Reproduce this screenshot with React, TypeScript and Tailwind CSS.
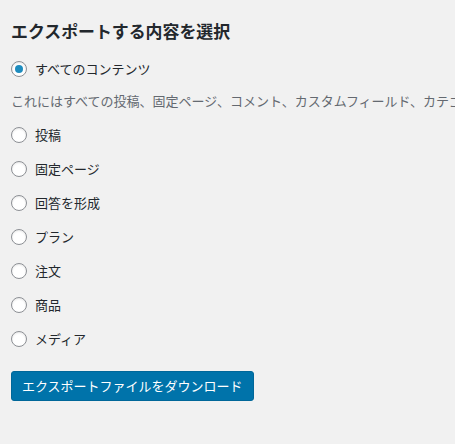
import { useState } from "react";

const OPTIONS = ["投稿", "固定ページ", "回答を形成", "プラン", "注文", "商品", "メディア"];

const FONT = { fontFamily: "'Noto Sans CJK JP', 'Noto Sans', sans-serif" };

function Radio({ checked }: { checked: boolean }) {
  return (
    <span className="w-4 h-4 rounded-full border border-[#8c8f94] bg-white flex items-center justify-center shrink-0 shadow-[inset_0_1px_2px_rgba(0,0,0,0.1)]">
      {checked && <span className="w-2 h-2 rounded-full bg-[#1e8cbe]" />}
    </span>
  );
}

export default function App() {
  const [selected, setSelected] = useState("all");

  return (
    <div className="w-[455px] h-[444px] overflow-hidden bg-[#f1f1f1] text-[#23282d] pl-[11px]" style={FONT}>
      {/* tail of the paragraph above, cut off by the viewport */}
      <div className="h-[2px] overflow-hidden flex items-end">
        <p className="text-[13px] leading-[20px] whitespace-nowrap text-[#444]">
          下のボタンをクリックすると、WordPress はあなたのコンピューターに保存する XML ファイルを作成します。
        </p>
      </div>

      <h2 className="mt-[18px] text-[16.9px] leading-[22px] font-bold whitespace-nowrap">
        エクスポートする内容を選択
      </h2>

      <label
        className="mt-[10px] h-[34px] flex items-center gap-2 text-[13px] cursor-pointer"
        onClick={() => setSelected("all")}
      >
        <Radio checked={selected === "all"} />
        <span>すべてのコンテンツ</span>
      </label>

      <p className="mt-[5px] text-[13px] leading-[20px] text-[#646970] whitespace-nowrap">
        これにはすべての投稿、固定ページ、コメント、カスタムフィールド、カテゴリー、タグ、ナビゲーションメニュー、カスタム投稿が含まれます。
      </p>

      <ul className="mt-[7px]">
        {OPTIONS.map((o) => (
          <li key={o}>
            <label
              className="h-[34px] flex items-center gap-2 text-[13px] cursor-pointer"
              onClick={() => setSelected(o)}
            >
              <Radio checked={selected === o} />
              <span>{o}</span>
            </label>
          </li>
        ))}
      </ul>

      <button className="mt-[15px] h-[30px] px-[10px] rounded-[3px] bg-[#0073aa] border border-[#006799] text-white text-[13px] leading-[28px] whitespace-nowrap">
        エクスポートファイルをダウンロード
      </button>
    </div>
  );
}
